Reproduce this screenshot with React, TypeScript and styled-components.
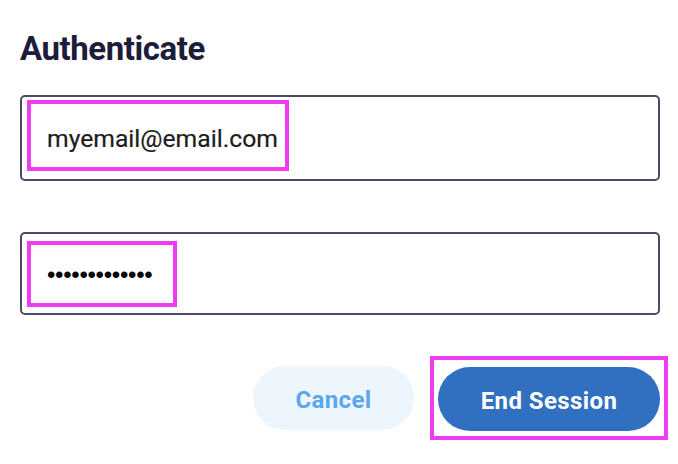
import React from "react";
import styled, { createGlobalStyle } from "styled-components";

const Global = createGlobalStyle`
  html, body { margin: 0; padding: 0; background: #ffffff; }
  body { font-family: Roboto, "Liberation Sans", Arial, sans-serif; }
`;

const Page = styled.div`
  width: 678px;
  height: 464px;
  box-sizing: border-box;
  padding: 30px 18px 0 20px;
  display: flex;
  flex-direction: column;
`;

const Title = styled.h1`
  margin: 0;
  font-family: Roboto, "Liberation Sans", Arial, sans-serif;
  font-weight: 700;
  font-size: 33px;
  line-height: 38px;
  color: #1d1d3b;
  letter-spacing: -0.45px;
`;

const Field = styled.div<{ $top: number; $height: number }>`
  margin-top: ${(p) => p.$top}px;
  height: ${(p) => p.$height}px;
  box-sizing: border-box;
  border: 2px solid #4b4b68;
  border-radius: 5px;
  display: flex;
  align-items: flex-start;
  padding: ${(p) => (p.$height > 84 ? 3 : 7)}px 0 0 5px;
`;

const Highlight = styled.div<{ $w: number; $h: number }>`
  box-sizing: border-box;
  width: ${(p) => p.$w}px;
  height: ${(p) => p.$h}px;
  border: 4px solid #ee3cf0;
  display: flex;
  align-items: center;
  padding-left: 16px;
`;

const Value = styled.span`
  font-family: Roboto, "Liberation Sans", Arial, sans-serif;
  font-size: 24.7px;
  color: #1c1c1c;
  white-space: nowrap;
  margin-top: 6px;
  -webkit-text-stroke: 0.2px #1c1c1c;
`;

const Dots = styled.span`
  font-family: "Liberation Sans", Arial, sans-serif;
  font-size: 24px;
  color: #000;
  letter-spacing: -0.3px;
  white-space: nowrap;
  margin-top: 2px;
`;

const Actions = styled.div`
  margin-top: 41px;
  margin-right: -8px;
  display: flex;
  justify-content: flex-end;
  align-items: center;
  gap: 16px;
`;

const Button = styled.button<{ $primary?: boolean }>`
  border: none;
  border-radius: 32px;
  height: 64px;
  padding: 3px 0 0;
  font-family: Roboto, "Liberation Sans", Arial, sans-serif;
  font-weight: 700;
  font-size: 24px;
  letter-spacing: 0.4px;
  cursor: pointer;
  background: ${(p) => (p.$primary ? "#3170c1" : "#edf6fd")};
  color: ${(p) => (p.$primary ? "#ffffff" : "#5aa7ef")};
  width: ${(p) => (p.$primary ? 222 : 161)}px;
`;

const ButtonFrame = styled.div`
  box-sizing: border-box;
  border: 4px solid #ee3cf0;
  padding: 7px 4px 5px 4px;
  display: flex;
`;

export default function App() {
  return (
    <>
      <Global />
      <Page>
        <Title>Authenticate</Title>
        <Field $top={27} $height={86}>
          <Highlight $w={262} $h={71}>
            <Value>myemail@email.com</Value>
          </Highlight>
        </Field>
        <Field $top={51} $height={83}>
          <Highlight $w={150} $h={66}>
            <Dots>•••••••••••••</Dots>
          </Highlight>
        </Field>
        <Actions>
          <Button>Cancel</Button>
          <ButtonFrame>
            <Button $primary>End Session</Button>
          </ButtonFrame>
        </Actions>
      </Page>
    </>
  );
}
